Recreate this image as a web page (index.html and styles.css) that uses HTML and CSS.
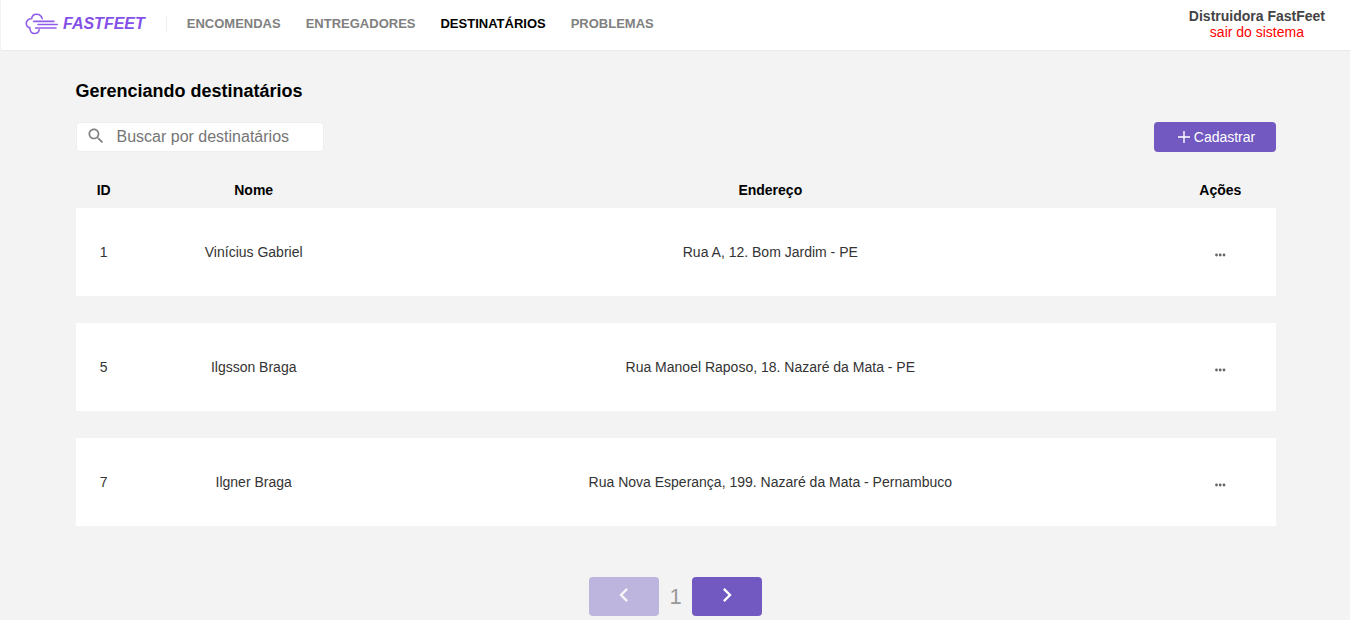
FILE: index.html
```html
<!DOCTYPE html>
<html lang="pt-BR">
<head>
<meta charset="utf-8">
<meta name="viewport" content="width=device-width, initial-scale=1">
<title>FastFeet</title>
<link rel="stylesheet" href="styles.css">
</head>
<body>
<header class="header">
  <a class="logo" href="#">
    <svg class="logo-icon" viewBox="0 0 34 22" aria-hidden="true">
      <path d="M17.2 5.6C16.4 2.7 14.1 1.2 11.7 1.2 8.8 1.2 6.9 3.1 6.6 5.8 3.2 5.7 1.3 7.8 1.3 10.3c0 2.3 1.3 4.1 3.6 4.6-.2 3.3 1.8 5.6 4.7 5.6 2.2 0 4.1-1.2 4.6-3.6M8.7 8.4h20.2M13 11.5h19.2M10.5 15h20.5"/>
    </svg>
    <span class="logo-name">FASTFEET</span>
  </a>
  <nav class="nav">
    <a href="#">ENCOMENDAS</a>
    <a href="#">ENTREGADORES</a>
    <a class="active" href="#" aria-current="page">DESTINATÁRIOS</a>
    <a href="#">PROBLEMAS</a>
  </nav>
  <div class="profile">
    <strong>Distruidora FastFeet</strong>
    <button class="logout" type="button">sair do sistema</button>
  </div>
</header>
<main class="content">
  <h1 class="title">Gerenciando destinatários</h1>
  <div class="toolbar">
    <label class="search">
      <svg class="search-icon" viewBox="0 0 24 24" aria-hidden="true"><path d="M15.5 14h-.79l-.28-.27C15.41 12.59 16 11.11 16 9.5 16 5.91 13.09 3 9.5 3S3 5.91 3 9.5 5.91 16 9.5 16c1.61 0 3.09-.59 4.23-1.57l.27.28v.79l5 4.99L20.49 19l-4.99-5zm-6 0C7.01 14 5 11.99 5 9.5S7.01 5 9.5 5 14 7.01 14 9.5 11.99 14 9.5 14z"/></svg>
      <input type="text" placeholder="Buscar por destinatários" aria-label="Buscar por destinatários">
    </label>
    <button class="create" type="button">
      <svg class="create-icon" viewBox="0 0 12 12" aria-hidden="true"><path d="M6 0v12M0 6h12"/></svg>
      Cadastrar
    </button>
  </div>
  <table class="table">
    <thead>
      <tr><th class="col-id">ID</th><th class="col-name">Nome</th><th>Endereço</th><th class="col-actions">Ações</th></tr>
    </thead>
    <tbody>
      <tr><td>1</td><td>Vinícius Gabriel</td><td>Rua A, 12. Bom Jardim - PE</td><td><button class="more" type="button" aria-label="Ações"><svg viewBox="0 0 12 4" aria-hidden="true"><circle cx="2.5" cy="2" r="1.4"/><circle cx="6.2" cy="2" r="1.4"/><circle cx="10" cy="2" r="1.4"/></svg></button></td></tr>
      <tr><td>5</td><td>Ilgsson Braga</td><td>Rua Manoel Raposo, 18. Nazaré da Mata - PE</td><td><button class="more" type="button" aria-label="Ações"><svg viewBox="0 0 12 4" aria-hidden="true"><circle cx="2.5" cy="2" r="1.4"/><circle cx="6.2" cy="2" r="1.4"/><circle cx="10" cy="2" r="1.4"/></svg></button></td></tr>
      <tr><td>7</td><td>Ilgner Braga</td><td>Rua Nova Esperança, 199. Nazaré da Mata - Pernambuco</td><td><button class="more" type="button" aria-label="Ações"><svg viewBox="0 0 12 4" aria-hidden="true"><circle cx="2.5" cy="2" r="1.4"/><circle cx="6.2" cy="2" r="1.4"/><circle cx="10" cy="2" r="1.4"/></svg></button></td></tr>
    </tbody>
  </table>
  <div class="pagination">
    <button type="button" aria-label="Página anterior" disabled><svg viewBox="0 0 24 24" aria-hidden="true"><path d="M15.41 7.41L14 6l-6 6 6 6 1.41-1.41L10.83 12z"/></svg></button>
    <span>1</span>
    <button type="button" aria-label="Próxima página"><svg viewBox="0 0 24 24" aria-hidden="true"><path d="M10 6L8.59 7.41 13.17 12l-4.58 4.59L10 18l6-6z"/></svg></button>
  </div>
</main>
</body>
</html>
```

FILE: styles.css
```css
* {
  box-sizing: border-box;
  margin: 0;
  padding: 0;
}

body {
  background: #f3f3f3;
  border-left: 1px solid #f3f3f3;
  font: 14px/16px "Liberation Sans", Arial, sans-serif;
}

a {
  text-decoration: none;
}

button,
input {
  border: 0;
  background: none;
  font: inherit;
}

button {
  cursor: pointer;
}

.header {
  display: flex;
  align-items: center;
  padding: 8px 25px 10px 24px;
  background: #fff;
  border-bottom: 1px solid #eaeaea;
}

.logo {
  display: flex;
  align-items: center;
  gap: 4px;
  color: #8450e8;
}

.logo-icon {
  width: 34px;
  height: 22px;
  fill: none;
  stroke: #7d40e7;
  stroke-width: 1.6;
  stroke-linecap: round;
  opacity: 0.85;
}

.logo-name {
  font-size: 16px;
  font-style: italic;
  font-weight: bold;
}

.nav {
  display: flex;
  gap: 25px;
  margin-left: 21px;
  padding-left: 20px;
  border-left: 1px solid #eee;
  font-size: 13px;
  font-weight: bold;
}

.nav a {
  color: #808080;
}

.nav .active {
  color: #000;
}

.profile {
  display: flex;
  flex-direction: column;
  align-items: center;
  margin-left: auto;
  color: #444;
}

.logout {
  color: #f00;
}

.content {
  max-width: 1200px;
  margin: 30px auto 0;
}

.title {
  font-size: 18px;
  line-height: 20px;
}

.toolbar {
  display: flex;
  justify-content: space-between;
  margin: 21px 0;
}

.search {
  display: flex;
  align-items: center;
  gap: 11px;
  width: 248px;
  height: 30px;
  padding: 0 9px;
  background: #fff;
  border: 1px solid #eee;
  border-radius: 4px;
}

.search-icon {
  flex: none;
  width: 20px;
  height: 20px;
  margin-bottom: 2px;
  fill: #808080;
}

.search input {
  width: 100%;
  min-width: 0;
  font-size: 16px;
  line-height: 18px;
}

.search input::placeholder {
  color: #757575;
}

.create {
  display: flex;
  align-items: center;
  justify-content: center;
  gap: 4px;
  width: 122px;
  height: 30px;
  padding-left: 4px;
  background: #7159c1;
  border-radius: 4px;
  color: #fff;
}

.create-icon {
  width: 12px;
  height: 12px;
  stroke: #fff;
  stroke-width: 1.4;
}

.table {
  width: 100%;
  table-layout: fixed;
  border-spacing: 0;
  text-align: center;
}

.table th {
  padding: 9px 0 10px;
  color: #000;
}

.table td {
  height: 115px;
  background: #fff;
  border-bottom: 27px solid #f3f3f3;
  color: #333;
}

.col-id {
  width: 4.7%;
}

.col-name {
  width: 20.3%;
}

.col-actions {
  width: 9.2%;
}

.more {
  padding-top: 4px;
  vertical-align: middle;
}

.more svg {
  display: block;
  width: 12px;
  height: 4px;
  fill: #666;
}

.pagination {
  display: flex;
  align-items: center;
  justify-content: center;
  gap: 10px;
  margin: 24px 0 4px;
  color: #999;
  font-size: 22px;
  line-height: 22px;
}

.pagination button {
  display: flex;
  justify-content: center;
  width: 70px;
  height: 39px;
  padding-top: 4px;
  background: #7159c1;
  border-radius: 4px;
}

.pagination button:disabled {
  opacity: 0.4;
  cursor: default;
}

.pagination svg {
  width: 28px;
  height: 28px;
  fill: #fff;
}
```
